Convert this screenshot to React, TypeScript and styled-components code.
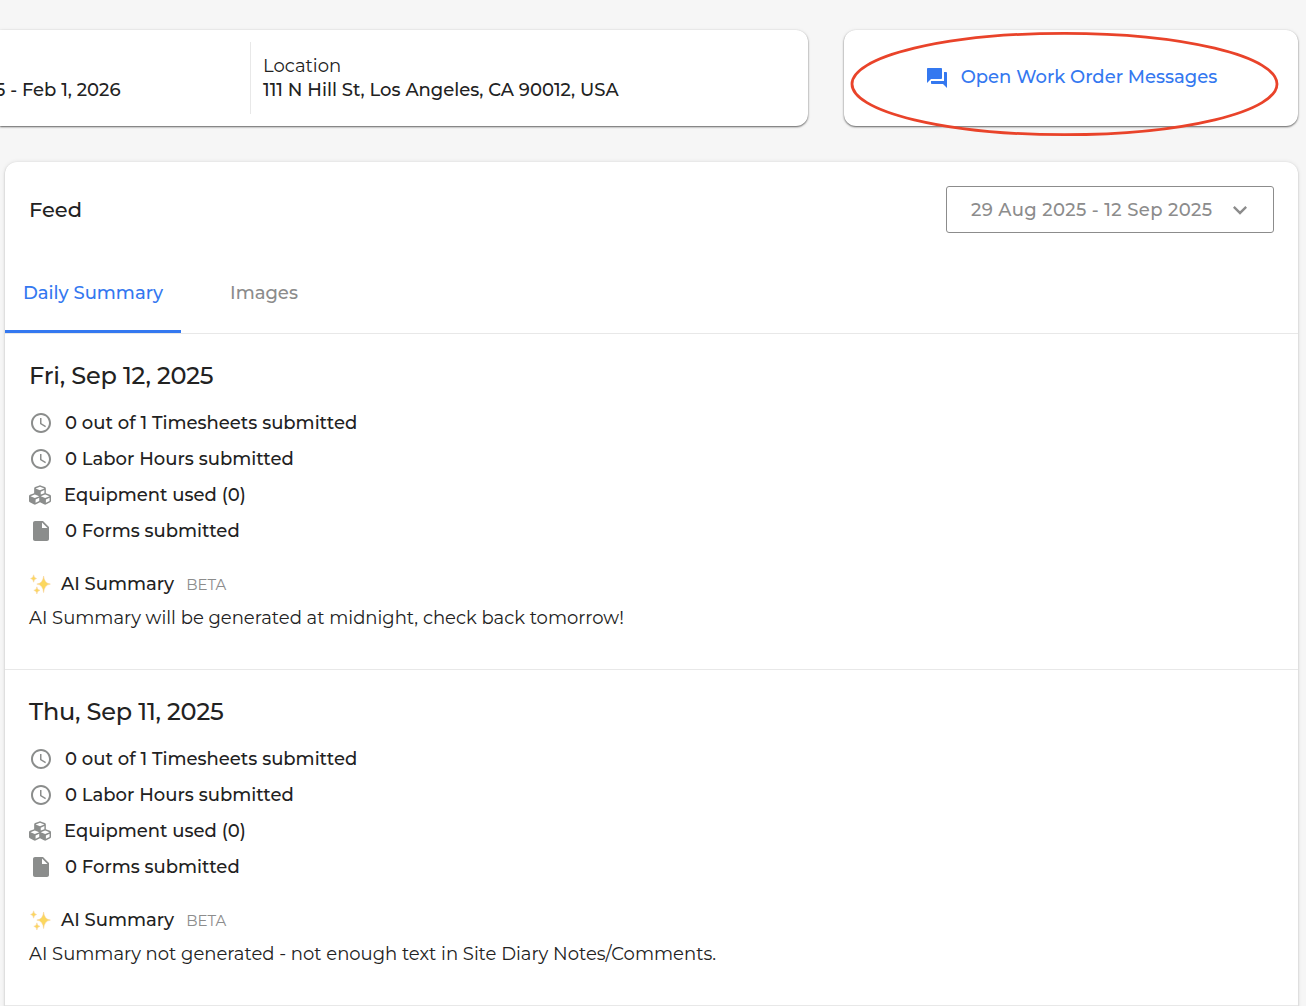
import styled, { createGlobalStyle } from 'styled-components'
import { FaCubes } from 'react-icons/fa'
import { MdAccessTime, MdExpandMore, MdInsertDriveFile, MdQuestionAnswer } from 'react-icons/md'

const colors = {
  background: '#f6f6f6',
  text: '#222222',
  muted: '#8c8c8c',
  icon: '#8b8d8c',
  primary: '#3478f0',
  line: '#e8e8e8',
  highlight: '#e9432a',
}

type Day = {
  date: string
  summary: string
}

const days: Day[] = [
  {
    date: 'Fri, Sep 12, 2025',
    summary: 'AI Summary will be generated at midnight, check back tomorrow!',
  },
  {
    date: 'Thu, Sep 11, 2025',
    summary: 'AI Summary not generated - not enough text in Site Diary Notes/Comments.',
  },
]

export default function App() {
  return (
    <Page>
      <GlobalStyle />
      <TopRow>
        <DetailsCard>
          <Dates>
            <Value>5 - Feb 1, 2026</Value>
          </Dates>
          <Location>
            <Label>Location</Label>
            <Value>111 N Hill St, Los Angeles, CA 90012, USA</Value>
          </Location>
        </DetailsCard>
        <MessagesCard>
          <MessagesButton>
            <MdQuestionAnswer size={24} />
            <span>Open Work Order Messages</span>
          </MessagesButton>
          <Highlight viewBox="0 0 430 106">
            <ellipse cx="214.5" cy="53" rx="212.5" ry="50.7" />
          </Highlight>
        </MessagesCard>
      </TopRow>
      <Feed>
        <FeedHeader>
          <FeedTitle>Feed</FeedTitle>
          <DateRange>
            29 Aug 2025 - 12 Sep 2025
            <MdExpandMore size={28} />
          </DateRange>
        </FeedHeader>
        <Tabs>
          <Tab $active $width={176}>
            Daily Summary
          </Tab>
          <Tab $width={166}>Images</Tab>
        </Tabs>
        {days.map((day) => (
          <DaySummary key={day.date} {...day} />
        ))}
      </Feed>
    </Page>
  )
}

function DaySummary({ date, summary }: Day) {
  return (
    <DaySection>
      <DayTitle>{date}</DayTitle>
      <Stat>
        <StatIcon>
          <MdAccessTime size={24} />
        </StatIcon>
        0 out of 1 Timesheets submitted
      </Stat>
      <Stat>
        <StatIcon>
          <MdAccessTime size={24} />
        </StatIcon>
        0 Labor Hours submitted
      </Stat>
      <Stat>
        <StatIcon $shift={-1}>
          <FaCubes size={22} />
        </StatIcon>
        Equipment used (0)
      </Stat>
      <Stat>
        <StatIcon>
          <MdInsertDriveFile size={24} />
        </StatIcon>
        0 Forms submitted
      </Stat>
      <SummaryHeading>
        <Sparkles />
        <SummaryTitle>AI Summary</SummaryTitle>
        <Beta>BETA</Beta>
      </SummaryHeading>
      <SummaryText>{summary}</SummaryText>
    </DaySection>
  )
}

function Sparkles() {
  return (
    <svg width="22" height="22" viewBox="0 0 22 22">
      <g fill="#fbd75e" stroke="#f6cf96" strokeWidth="0.5">
        <path d="M14.6 3Q15.2 10.2 21.4 11.1Q15.2 12 14.6 19.6Q14 12 7.8 11.1Q14 10.2 14.6 3Z" />
        <path d="M4.6 1.8Q4.9 5 7.6 5.5Q4.9 6 4.6 9.2Q4.3 6 1.6 5.5Q4.3 5 4.6 1.8Z" />
        <path d="M7.9 13.8Q8.2 16.9 11 17.3Q8.2 17.7 7.9 21Q7.6 17.7 4.8 17.3Q7.6 16.9 7.9 13.8Z" />
      </g>
    </svg>
  )
}

const GlobalStyle = createGlobalStyle`
  * {
    box-sizing: border-box;
  }
  body {
    margin: 0;
    background: ${colors.background};
    overflow: hidden;
  }
`

const Page = styled.div`
  height: 1006px;
  overflow: hidden;
  padding: 30px 8px 0 0;
  background: ${colors.background};
  color: ${colors.text};
  font-family: 'Montserrat', 'Inter', sans-serif;
  font-size: 18px;
  font-weight: 500;
`

const TopRow = styled.div`
  display: flex;
  justify-content: space-between;
  height: 96px;
  margin-bottom: 36px;
`

const Card = styled.section`
  background: #ffffff;
  border-radius: 12px;
  box-shadow: 0 1px 2px rgba(0, 0, 0, 0.6), 0 0 4px rgba(0, 0, 0, 0.06);
`

const DetailsCard = styled(Card)`
  display: flex;
  align-items: center;
  width: 808px;
  border-radius: 0 12px 12px 0;
`

const Dates = styled.div`
  display: flex;
  align-items: flex-end;
  width: 251px;
  height: 72px;
  padding-bottom: 12px;
  border-right: 1px solid ${colors.line};
  white-space: nowrap;

  & > * {
    margin-left: -5px;
  }
`

const Location = styled.div`
  padding-left: 12px;
`

const Label = styled.div`
  line-height: 24px;
  font-weight: 400;
`

const Value = styled.div`
  line-height: 24px;
`

const MessagesCard = styled(Card)`
  position: relative;
  display: flex;
  justify-content: center;
  align-items: flex-start;
  width: 454px;
  padding-top: 30px;
`

const MessagesButton = styled.button`
  display: flex;
  align-items: center;
  gap: 12px;
  height: 36px;
  padding: 0;
  border: 0;
  background: none;
  color: ${colors.primary};
  font: inherit;

  span {
    margin-top: -2px;
  }
`

const Highlight = styled.svg`
  position: absolute;
  top: 1px;
  left: 6px;
  width: 430px;
  height: 106px;
  pointer-events: none;

  ellipse {
    fill: none;
    stroke: ${colors.highlight};
    stroke-width: 2.8;
  }
`

const Feed = styled(Card)`
  height: 900px;
  margin-left: 5px;
  box-shadow: 0 1px 2px rgba(0, 0, 0, 0.22), 0 0 4px rgba(0, 0, 0, 0.1);
`

const FeedHeader = styled.header`
  display: flex;
  align-items: center;
  justify-content: space-between;
  height: 95px;
  padding: 0 24px;
`

const FeedTitle = styled.h2`
  margin: 0;
  font-size: 21px;
  font-weight: 500;
`

const DateRange = styled.button`
  display: flex;
  align-items: center;
  justify-content: space-between;
  width: 328px;
  height: 47px;
  padding: 0 19px 0 24px;
  border: 1px solid ${colors.muted};
  border-radius: 3px;
  background: #ffffff;
  color: ${colors.muted};
  font: inherit;
  letter-spacing: 0.36px;
`

const Tabs = styled.nav`
  display: flex;
  height: 77px;
  border-bottom: 1px solid ${colors.line};
`

const Tab = styled.div<{ $active?: boolean; $width: number }>`
  width: ${({ $width }) => $width}px;
  height: 76px;
  padding-top: 18px;
  border-bottom: 3px solid ${({ $active }) => ($active ? colors.primary : 'transparent')};
  color: ${({ $active }) => ($active ? colors.primary : colors.muted)};
  line-height: 36px;
  text-align: center;
`

const DaySection = styled.article`
  height: 336px;
  padding: 24px 24px 0;
  border-bottom: 1px solid ${colors.line};
`

const DayTitle = styled.h3`
  margin: 0 0 11px;
  font-size: 24px;
  font-weight: 500;
  line-height: 36px;
  letter-spacing: -0.2px;
`

const Stat = styled.div`
  display: flex;
  align-items: center;
  height: 36px;
  line-height: 22px;
`

const StatIcon = styled.span<{ $shift?: number }>`
  display: flex;
  justify-content: center;
  width: 24px;
  margin-left: ${({ $shift = 0 }) => $shift}px;
  margin-right: 12px;
  color: ${colors.icon};
`

const SummaryHeading = styled.div`
  display: flex;
  align-items: center;
  height: 36px;
  margin-top: 17px;
  line-height: 22px;
`

const SummaryTitle = styled.span`
  margin-left: 10px;
`

const Beta = styled.span`
  margin: 2px 0 0 12px;
  color: ${colors.muted};
  font-size: 15px;
  font-weight: 420;
`

const SummaryText = styled.p`
  margin: 0;
  font-weight: 400;
  line-height: 32px;
`
